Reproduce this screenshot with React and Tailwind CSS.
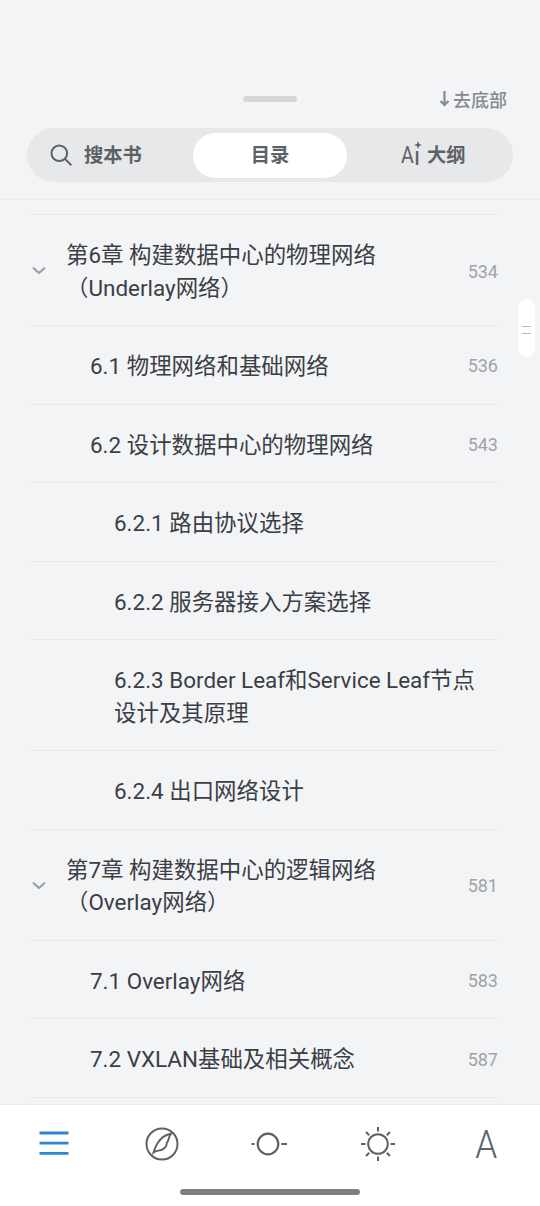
import React from 'react';
import clsx from 'clsx';

const CHAPTERS = [
  { lines: ['第6章 构建数据中心的物理网络', '（Underlay网络）'], page: 534, level: 0 },
  { lines: ['6.1 物理网络和基础网络'], page: 536, level: 1 },
  { lines: ['6.2 设计数据中心的物理网络'], page: 543, level: 1 },
  { lines: ['6.2.1 路由协议选择'], level: 2 },
  { lines: ['6.2.2 服务器接入方案选择'], level: 2 },
  { lines: ['6.2.3 Border Leaf和Service Leaf节点', '设计及其原理'], level: 2 },
  { lines: ['6.2.4 出口网络设计'], level: 2 },
  { lines: ['第7章 构建数据中心的逻辑网络', '（Overlay网络）'], page: 581, level: 0 },
  { lines: ['7.1 Overlay网络'], page: 583, level: 1 },
  { lines: ['7.2 VXLAN基础及相关概念'], page: 587, level: 1 },
];

const ChapterRow = ({ lines, page, level }) => (
  <li
    className={clsx(
      'flex shrink-0 items-center border-b border-[#e8eaec]',
      lines.length > 1 ? 'h-[111px]' : 'h-[78.55px]'
    )}
  >
    <div className={clsx('shrink-0', level === 0 && 'w-9', level === 1 && 'w-15', level === 2 && 'w-21')}>
      {level === 0 && (
        <svg className="mt-0.5" width="18" height="12" viewBox="0 0 18 12" fill="none" stroke="#9b9ea6" strokeWidth="2.2" strokeLinecap="round" strokeLinejoin="round">
          <path d="M3.7 3.2 9 8l5.3-4.8" />
        </svg>
      )}
    </div>
    <div className="flex-1 pt-[3px] text-[22.45px] leading-[32.5px] whitespace-nowrap text-[#3b3e45]">
      {lines.map((line) => (
        <p key={line}>{line}</p>
      ))}
    </div>
    {page && <span className="pt-[3px] text-[18px] leading-none text-[#a0a3ab]">{page}</span>}
  </li>
);

const Tabs = () => (
  <div className="mx-[27px] mt-[17px] flex h-[54px] items-center rounded-full bg-[#e7e8ea] text-[19.3px] font-bold text-[#5d6168]">
    <button className="flex h-full w-[166px] items-center pl-[23px]">
      <svg width="23" height="23" viewBox="0 0 23 23" fill="none" stroke="#5d6168" strokeWidth="2">
        <circle cx="9.3" cy="9.3" r="7.8" />
        <path d="m14.8 14.8 6.6 6.6" />
      </svg>
      <span className="ml-[11px] pt-[3px]">搜本书</span>
    </button>
    <button className="h-[45px] w-[154px] rounded-full bg-white pt-[3px] text-center">目录</button>
    <button className="flex h-full flex-1 items-center pl-[54px]">
      <span className="relative flex w-[26px] pt-[3px] text-[23px] leading-none font-normal">
        <span className="w-[13px] origin-left scale-x-85">A</span>
        <span className="text-[25px]">ı</span>
        <svg className="absolute top-0 left-[12.5px]" width="8" height="8" viewBox="0 0 8 8" fill="#5d6168">
          <path d="M4 0 5.1 2.9 8 4 5.1 5.1 4 8 2.9 5.1 0 4 2.9 2.9Z" />
        </svg>
      </span>
      <span className="pt-[3px]">大纲</span>
    </button>
  </div>
);

const Toolbar = () => (
  <nav className="h-[102px] shrink-0 border-t border-[#eaebed] bg-white">
    <div className="grid h-[78px] grid-cols-5 place-items-center text-[#5d6168]">
      <svg className="mr-px" width="30" height="26" viewBox="0 0 30 26" fill="none" stroke="#2f86d6" strokeWidth="2.8">
        <path d="M.5 2h29M.5 12.2h29M.5 22.4h29" />
      </svg>
      <svg className="mr-px" width="34" height="34" viewBox="0 0 34 34" fill="none" stroke="currentColor" strokeWidth="2">
        <circle cx="17" cy="17" r="15.5" />
        <path d="M26 6.700C17 8.300 11.500 15.500 8.500 25.500 11 23.500 14 24 17.200 22.600 20.500 21 21.800 18.500 21.800 15.800 24.200 13.500 23.200 10 26 6.700Z" strokeWidth="1.9" />
      </svg>
      <svg className="mr-1" width="38" height="24" viewBox="0 0 38 24" fill="none" stroke="currentColor" strokeWidth="2.2">
        <circle cx="19" cy="12" r="10.3" />
        <path d="M2.500 12h3M32.300 12h6" />
      </svg>
      <svg width="36" height="36" viewBox="0 0 36 36" fill="none" stroke="currentColor" strokeWidth="2">
        <circle cx="18" cy="18" r="9.8" />
        <path d="M18 1v4.500M18 30.500V35M1 18h4.500M30.500 18H35M6 6l3.200 3.200M26.800 26.800 30 30M6 30l3.200-3.200M26.800 9.200 30 6" />
      </svg>
      <span className="scale-x-90 pt-[3px] text-[39px] leading-none font-[350]">A</span>
    </div>
    <div className="mx-auto mt-1.5 h-1.5 w-[180px] rounded-full bg-[#808080]" />
  </nav>
);

export default function App() {
  return (
    <main className="relative flex h-[1206px] w-[540px] flex-col overflow-hidden bg-[#f3f4f6] font-[Roboto,'Noto_Sans_CJK_SC',sans-serif]">
      <header className="h-[200px] shrink-0 border-b border-[#eaebed] pt-[86px]">
        <div className="grid h-[25px] grid-cols-3 items-center pr-[33px] pl-[33px]">
          <span />
          <span className="h-1.5 w-[54px] justify-self-center rounded-full bg-[#d5d6d8]" />
          <button className="flex items-center justify-self-end text-[18px] leading-none font-medium text-[#858992]">
            <svg width="14" height="18" viewBox="0 0 14 18" fill="none" stroke="currentColor" strokeWidth="2.2">
              <path d="M5.5 1v14M1.5 11l4 4 4-4" />
            </svg>
            <span className="pt-[4px]">去底部</span>
          </button>
        </div>
        <Tabs />
      </header>

      <ul className="mr-[42px] ml-[30px] flex min-h-0 flex-1 flex-col overflow-hidden">
        <li className="h-[15px] shrink-0 border-b border-[#e8eaec]" />
        {CHAPTERS.map((chapter) => (
          <ChapterRow key={chapter.lines[0]} {...chapter} />
        ))}
      </ul>

      <Toolbar />

      {/* scroll handle floating over the list edge */}
      <div className="absolute top-[299px] left-[518px] flex h-[58px] w-[17px] flex-col items-center justify-center gap-1.5 rounded-lg bg-white pt-[3px]">
        <span className="h-px w-[9px] bg-[#b5b7bb]" />
        <span className="h-px w-[9px] bg-[#b5b7bb]" />
      </div>
    </main>
  );
}
